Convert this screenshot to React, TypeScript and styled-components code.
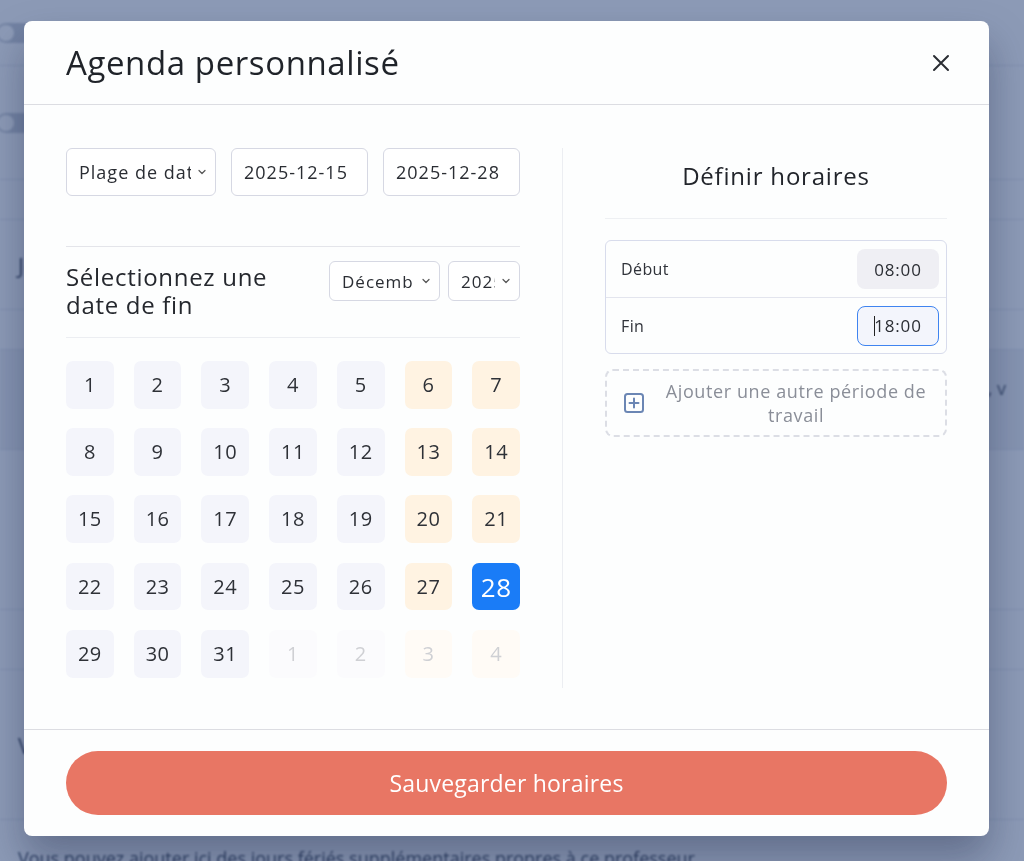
import React from "react";
import styled, { createGlobalStyle } from "styled-components";

const Global = createGlobalStyle`
  html, body { margin: 0; padding: 0; }
  body {
    font-family: "Open Sans", "Noto Sans", sans-serif;
    background: #ffffff;
    width: 1024px;
    height: 861px;
    overflow: hidden;
  }
  * { box-sizing: border-box; }
`;

/* ---------- background page ---------- */
const Page = styled.div`
  width: 1024px;
  height: 861px;
  background: #ffffff;
  display: flex;
  flex-direction: column;
  color: #2b3140;
  filter: blur(1px);
`;

const PageRow = styled.div<{ $h: number; $tint?: boolean; $top?: boolean }>`
  height: ${(p) => p.$h}px;
  flex-shrink: 0;
  border-bottom: 1px solid #e3e6ee;
  display: flex;
  align-items: ${(p) => (p.$top ? "flex-start" : "center")};
  padding: ${(p) => (p.$top ? "26px 18px 0" : "0 18px")};
  gap: 14px;
  background: ${(p) => (p.$tint ? "#f1f2f5" : "transparent")};
`;

const Toggle = styled.div`
  width: 40px;
  height: 20px;
  border-radius: 10px;
  background: #c9cdd6;
  margin-left: -22px;
  position: relative;
  &::after {
    content: "";
    position: absolute;
    left: 2px;
    top: 2px;
    width: 16px;
    height: 16px;
    border-radius: 50%;
    background: #ffffff;
  }
`;

const PageText = styled.span<{ $size?: number; $color?: string }>`
  font-size: ${(p) => p.$size ?? 18}px;
  color: ${(p) => p.$color ?? "#3a4150"};
  white-space: nowrap;
`;

const PageNote = styled.div`
  padding: 0 0 0 50px;
  font-size: 18px;
  line-height: 24px;
  color: #4a5060;
  display: flex;
  justify-content: space-between;
  width: 100%;
`;

const Overlay = styled.div`
  position: fixed;
  inset: 0;
  background: rgba(35, 61, 115, 0.52);
  display: flex;
  align-items: flex-start;
  padding: 21px 0 0 24px;
`;

/* ---------- modal ---------- */
const Modal = styled.div`
  width: 965px;
  height: 815px;
  background: #fdfefe;
  border-radius: 8px;
  box-shadow: 0 22px 40px rgba(20, 30, 60, 0.35);
  display: flex;
  flex-direction: column;
  font-family: "Open Sans", "Noto Sans", sans-serif;
  color: #22252b;
`;

const Header = styled.div`
  height: 84px;
  border-bottom: 1px solid #dcdde2;
  display: flex;
  align-items: center;
  justify-content: space-between;
  padding: 0 38px 0 42px;
`;

const Title = styled.h1`
  margin: 0;
  font-size: 33px;
  font-weight: 400;
  letter-spacing: 0.6px;
  color: #1f2329;
`;

const CloseBtn = styled.button`
  border: 0;
  background: transparent;
  padding: 0;
  width: 20px;
  height: 20px;
  display: flex;
  align-items: center;
  justify-content: center;
`;

const Body = styled.div`
  flex: 1;
  display: flex;
  padding: 43px 42px 41px;
`;

const LeftCol = styled.div`
  width: 497px;
  padding-right: 42px;
  border-right: 1px solid #eceef2;
  padding-bottom: 10px;
  display: flex;
  flex-direction: column;
`;

const RightCol = styled.div`
  flex: 1;
  padding-left: 42px;
  display: flex;
  flex-direction: column;
`;

const FieldRow = styled.div`
  display: flex;
  gap: 15px;
  padding-bottom: 50px;
  border-bottom: 1px solid #e4e5ea;
`;

const Field = styled.div<{ $w: number; $h?: number; $size?: number }>`
  width: ${(p) => p.$w}px;
  height: ${(p) => p.$h ?? 48}px;
  border: 1px solid #d6d8e3;
  border-radius: 6px;
  background: #ffffff;
  display: flex;
  align-items: center;
  padding: 0 8px 0 12px;
  font-size: ${(p) => p.$size ?? 18}px;
  color: #2a2d33;
  gap: 6px;
  overflow: hidden;
`;

const FieldText = styled.span`
  flex: 1;
  white-space: nowrap;
  overflow: hidden;
  letter-spacing: 1px;
`;

const CalHeader = styled.div`
  display: flex;
  justify-content: space-between;
  align-items: flex-start;
  padding: 14px 0 18px;
  border-bottom: 1px solid #eceef2;
`;

const CalTitle = styled.h2`
  margin: 0;
  font-size: 24px;
  font-weight: 400;
  line-height: 28px;
  letter-spacing: 0.7px;
  color: #25282e;
  padding-top: 2px;
`;

const SelectGroup = styled.div`
  display: flex;
  gap: 8px;
`;

const Grid = styled.div`
  margin-top: 23px;
  display: grid;
  grid-template-columns: repeat(7, 1fr);
  column-gap: 20px;
  row-gap: 19.5px;
`;

type Kind = "week" | "weekend" | "selected" | "otherWeek" | "otherWeekend";

const Day = styled.div<{ $kind: Kind }>`
  aspect-ratio: 1 / 1;
  border-radius: 7px;
  display: flex;
  align-items: center;
  justify-content: center;
  line-height: 1;
  font-size: ${(p) => (p.$kind === "selected" ? 26 : 20)}px;
  letter-spacing: 0.5px;
  background: ${(p) =>
    ({
      week: "#f4f5fb",
      weekend: "#fff3e2",
      selected: "#1a7cf7",
      otherWeek: "#fbfbfd",
      otherWeekend: "#fffbf6",
    })[p.$kind]};
  color: ${(p) =>
    p.$kind === "selected"
      ? "#ffffff"
      : p.$kind === "otherWeek" || p.$kind === "otherWeekend"
      ? "#cfd0d4"
      : "#2e3137"};
`;

const SideTitle = styled.h2`
  margin: 0;
  text-align: center;
  font-size: 24px;
  font-weight: 400;
  line-height: 28px;
  letter-spacing: 0.8px;
  padding: 14px 0 28px;
  border-bottom: 1px solid #eef0f3;
  color: #22252b;
`;

const TimeBox = styled.div`
  margin-top: 21px;
  border: 1px solid #d8dcec;
  border-radius: 6px;
  display: flex;
  flex-direction: column;
`;

const TimeRow = styled.div<{ $last?: boolean }>`
  height: ${(p) => (p.$last ? 55 : 57)}px;
  display: flex;
  align-items: center;
  justify-content: space-between;
  padding: 0 7px 0 15px;
  border-bottom: ${(p) => (p.$last ? "none" : "1px solid #e3e5ee")};
  font-size: 16px;
  letter-spacing: 0.4px;
  color: #30333a;
`;

const TimePill = styled.div<{ $focus?: boolean }>`
  width: 82px;
  height: 40px;
  border-radius: 8px;
  display: flex;
  align-items: center;
  justify-content: center;
  font-size: 17px;
  letter-spacing: 0.8px;
  color: #2a2d33;
  background: ${(p) => (p.$focus ? "#f3f5fc" : "#efeff4")};
  border: ${(p) => (p.$focus ? "1.5px solid #3f84f0" : "1.5px solid transparent")};
`;

const Caret = styled.span`
  display: inline-block;
  width: 1px;
  height: 20px;
  background: #222;
  margin-right: -1px;
`;

const AddBox = styled.div`
  margin-top: 15px;
  height: 68px;
  border: 2px dashed #dcdee5;
  border-radius: 8px;
  display: flex;
  align-items: center;
  padding: 0 6px 0 16px;
  gap: 8px;
  color: #8a8e98;
`;

const AddText = styled.span`
  flex: 1;
  text-align: center;
  font-size: 18px;
  line-height: 24px;
  letter-spacing: 0.6px;
`;

const Footer = styled.div`
  border-top: 1px solid #dcdde2;
  padding: 21px 42px 21px;
`;

const SaveButton = styled.button`
  width: 100%;
  height: 64px;
  border: 0;
  border-radius: 32px;
  background: #e87664;
  color: #ffffff;
  font-family: "Open Sans", "Noto Sans", sans-serif;
  font-size: 23px;
  font-weight: 500;
  letter-spacing: 0.2px;
`;

const Chevron = () => (
  <svg width="10" height="10" viewBox="0 0 10 10" fill="none">
    <path d="M2 3.5 L5 6.5 L8 3.5" stroke="#555" strokeWidth="1.2" strokeLinecap="round" strokeLinejoin="round" />
  </svg>
);

const days: { n: number; kind: Kind }[] = [];
for (let i = 1; i <= 31; i++) {
  const col = (i - 1) % 7;
  let kind: Kind = col >= 5 ? "weekend" : "week";
  if (i === 28) kind = "selected";
  days.push({ n: i, kind });
}
[1, 2, 3, 4].forEach((n, idx) => {
  days.push({ n, kind: idx >= 2 ? "otherWeekend" : "otherWeek" });
});

export default function App() {
  return (
    <>
      <Global />
      <Page>
        <PageRow $h={66}>
          <Toggle />
          <PageText $color="#c0504d">Suppression</PageText>
        </PageRow>
        <PageRow $h={114}>
          <Toggle />
        </PageRow>
        <PageRow $h={40} />
        <PageRow $h={90}>
          <PageText $size={22}>Journées</PageText>
        </PageRow>
        <PageRow $h={40} />
        <PageRow $h={100} $tint>
          <PageNote>
            <span>Les jours sélectionnés<br />apparaissent</span>
            <span>mois, v</span>
          </PageNote>
        </PageRow>
        <PageRow $h={160} />
        <PageRow $h={60} />
        <PageRow $h={150}>
          <PageText $size={22}>Vacances</PageText>
        </PageRow>
        <PageRow $h={60} $top>
          <PageText>Vous pouvez ajouter ici des jours fériés supplémentaires propres à ce professeur.</PageText>
        </PageRow>
      </Page>
      <Overlay>
        <Modal>
          <Header>
            <Title>Agenda personnalisé</Title>
            <CloseBtn aria-label="Fermer">
              <svg width="18" height="18" viewBox="0 0 18 18">
                <path d="M2 2 L16 16 M16 2 L2 16" stroke="#2a2d33" strokeWidth="2" strokeLinecap="round" />
              </svg>
            </CloseBtn>
          </Header>
          <Body>
            <LeftCol>
              <FieldRow>
                <Field $w={150}>
                  <FieldText>Plage de dates</FieldText>
                  <Chevron />
                </Field>
                <Field $w={137}>
                  <FieldText>2025-12-15</FieldText>
                </Field>
                <Field $w={137}>
                  <FieldText>2025-12-28</FieldText>
                </Field>
              </FieldRow>
              <CalHeader>
                <CalTitle>
                  Sélectionnez une
                  <br />
                  date de fin
                </CalTitle>
                <SelectGroup>
                  <Field $w={111} $h={40} $size={17}>
                    <FieldText>Décembre</FieldText>
                    <Chevron />
                  </Field>
                  <Field $w={72} $h={40} $size={17}>
                    <FieldText>2025</FieldText>
                    <Chevron />
                  </Field>
                </SelectGroup>
              </CalHeader>
              <Grid>
                {days.map((d, i) => (
                  <Day key={i} $kind={d.kind}>
                    {d.n}
                  </Day>
                ))}
              </Grid>
            </LeftCol>
            <RightCol>
              <SideTitle>Définir horaires</SideTitle>
              <TimeBox>
                <TimeRow>
                  <span>Début</span>
                  <TimePill>08:00</TimePill>
                </TimeRow>
                <TimeRow $last>
                  <span>Fin</span>
                  <TimePill $focus>
                    <Caret />
                    18:00
                  </TimePill>
                </TimeRow>
              </TimeBox>
              <AddBox>
                <svg width="22" height="22" viewBox="0 0 22 22" fill="none">
                  <rect x="2" y="2" width="18" height="18" rx="2.5" stroke="#6b86b4" strokeWidth="2" />
                  <path d="M11 6.5 V15.5 M6.5 11 H15.5" stroke="#6b86b4" strokeWidth="2" strokeLinecap="round" />
                </svg>
                <AddText>Ajouter une autre période de travail</AddText>
              </AddBox>
            </RightCol>
          </Body>
          <Footer>
            <SaveButton>Sauvegarder horaires</SaveButton>
          </Footer>
        </Modal>
      </Overlay>
    </>
  );
}
